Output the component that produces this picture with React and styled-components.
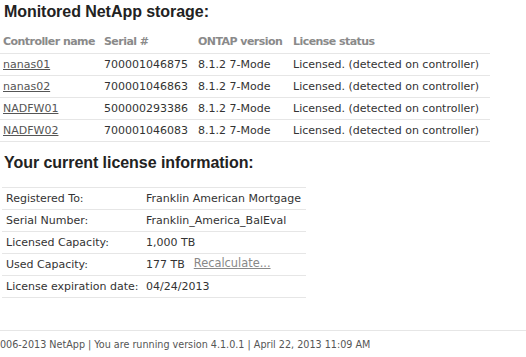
import React from "react";
import styled, { createGlobalStyle } from "styled-components";

const Global = createGlobalStyle`
  html, body { margin: 0; padding: 0; background: #fff; }
  body { font-family: "DejaVu Sans", Verdana, sans-serif; font-size: 11px; color: #333; }
`;

const Page = styled.div`
  display: flex;
  flex-direction: column;
  align-items: flex-start;
`;

const Heading = styled.h2`
  margin: ${(p) => p.$mt}px 0 0 4px;
  font-family: "Liberation Sans", Arial, sans-serif;
  font-weight: bold;
  font-size: 16px;
  line-height: 20px;
  letter-spacing: -0.05px;
  color: #222;
`;

const Table = styled.table`
  border-collapse: collapse;
  margin: ${(p) => p.$mt}px 0 0 ${(p) => p.$ml}px;
  width: ${(p) => p.$w}px;
  table-layout: fixed;
`;

const Row = styled.tr`
  height: 22px;
  border-bottom: 1px solid #e6e6e6;
  ${(p) => (p.$topBorder ? "border-top: 1px solid #e6e6e6;" : "")}
`;

const HeadCell = styled.th`
  text-align: left;
  font-weight: bold;
  color: #8a8a8a;
  padding: 0 0 0 3px;
  white-space: nowrap;
  width: ${(p) => p.$w}px;
  font-size: 11px;
  letter-spacing: -0.55px;
`;

const Cell = styled.td`
  padding: 0 0 0 ${(p) => p.$pl || 3}px;
  white-space: nowrap;
  color: #333;
  font-size: 11px;
  width: ${(p) => (p.$w ? `${p.$w}px` : "auto")};
`;

const Link = styled.a`
  color: #555;
  text-decoration: underline;
  cursor: pointer;
`;

const Recalc = styled.a`
  color: #888;
  text-decoration: underline;
  margin-left: 9px;
  font-size: 11.4px;
  position: relative;
  top: -1px;
  cursor: pointer;
`;

const Footer = styled.div`
  align-self: stretch;
  margin-top: 32px;
  border-top: 1px solid #e6e6e6;
  padding: 7px 0 0 0;
  font-family: "DejaVu Sans Condensed", "Liberation Sans", sans-serif;
  font-size: 10.7px;
  line-height: 14px;
  color: #555;
  white-space: nowrap;
`;

const controllers = [
  ["nanas01", "700001046875"],
  ["nanas02", "700001046863"],
  ["NADFW01", "500000293386"],
  ["NADFW02", "700001046083"],
];

const license = [
  ["Registered To:", "Franklin American Mortgage"],
  ["Serial Number:", "Franklin_America_BalEval"],
  ["Licensed Capacity:", "1,000 TB"],
  ["Used Capacity:", "177 TB", true],
  ["License expiration date:", "04/24/2013"],
];

export default function App() {
  return (
    <>
      <Global />
      <Page>
        <Heading $mt={2}>Monitored NetApp storage:</Heading>
        <Table $mt={9} $ml={0} $w={490}>
          <thead>
            <Row>
              <HeadCell $w={98}>Controller name</HeadCell>
              <HeadCell $w={91}>Serial #</HeadCell>
              <HeadCell $w={92}>ONTAP version</HeadCell>
              <HeadCell $w={197}>License status</HeadCell>
            </Row>
          </thead>
          <tbody>
            {controllers.map(([name, serial]) => (
              <Row key={name}>
                <Cell>
                  <Link>{name}</Link>
                </Cell>
                <Cell>{serial}</Cell>
                <Cell>8.1.2 7-Mode</Cell>
                <Cell>Licensed. (detected on controller)</Cell>
              </Row>
            ))}
          </tbody>
        </Table>
        <Heading $mt={11}>Your current license information:</Heading>
        <Table $mt={14} $ml={2} $w={304}>
          <tbody>
            {license.map(([label, value, recalc], i) => (
              <Row key={label} $topBorder={i === 0}>
                <Cell $pl={4} $w={136}>{label}</Cell>
                <Cell $pl={4}>
                  {value}
                  {recalc && <Recalc>Recalculate...</Recalc>}
                </Cell>
              </Row>
            ))}
          </tbody>
        </Table>
        <Footer>006-2013 NetApp | You are running version 4.1.0.1 | April 22, 2013 11:09 AM</Footer>
      </Page>
    </>
  );
}
